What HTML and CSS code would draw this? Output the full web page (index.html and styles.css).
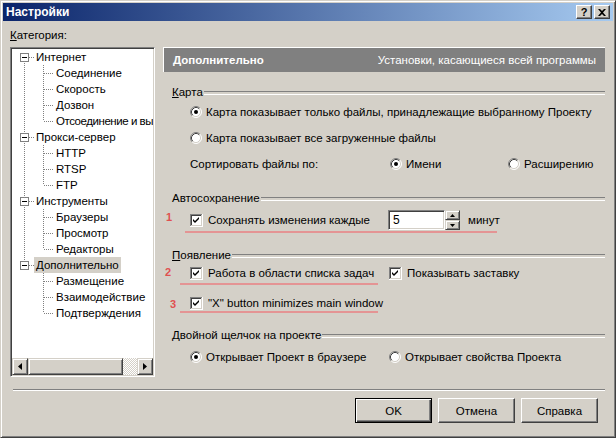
FILE: index.html
```html
<!DOCTYPE html>
<html>
<head>
<meta charset="utf-8">
<link rel="stylesheet" href="styles.css">
</head>
<body>
<div class="window">
  <div class="titlebar">
    <span class="title">Настройки</span>
    <div class="tb-btns">
      <span class="tb-btn">?</span>
      <span class="tb-btn"><svg width="8" height="7" viewBox="0 0 8 7"><path d="M0 0h2l2 2 2-2h2L5 3.5 8 7H6L4 5 2 7H0l3-3.5z" fill="#000"/></svg></span>
    </div>
  </div>
  <div class="body">
    <div class="cat-label"><u>К</u>атегория:</div>
    <div class="main">
      <div class="tree">
        <div class="tree-list">
          <div class="row"><span class="g rfirst"><span class="exp"></span></span><span class="txt">Интернет</span></div>
          <div class="row"><span class="g v"></span><span class="g2 tee"></span><span class="txt">Соединение</span></div>
          <div class="row"><span class="g v"></span><span class="g2 tee"></span><span class="txt">Скорость</span></div>
          <div class="row"><span class="g v"></span><span class="g2 tee"></span><span class="txt">Дозвон</span></div>
          <div class="row"><span class="g v"></span><span class="g2 ell"></span><span class="txt tight">Отсоединение и вы</span></div>
          <div class="row"><span class="g rmid"><span class="exp"></span></span><span class="txt">Прокси-сервер</span></div>
          <div class="row"><span class="g v"></span><span class="g2 tee"></span><span class="txt">HTTP</span></div>
          <div class="row"><span class="g v"></span><span class="g2 tee"></span><span class="txt">RTSP</span></div>
          <div class="row"><span class="g v"></span><span class="g2 ell"></span><span class="txt">FTP</span></div>
          <div class="row"><span class="g rmid"><span class="exp"></span></span><span class="txt">Инструменты</span></div>
          <div class="row"><span class="g v"></span><span class="g2 tee"></span><span class="txt">Браузеры</span></div>
          <div class="row"><span class="g v"></span><span class="g2 tee"></span><span class="txt">Просмотр</span></div>
          <div class="row"><span class="g v"></span><span class="g2 ell"></span><span class="txt">Редакторы</span></div>
          <div class="row"><span class="g rlast"><span class="exp"></span></span><span class="txt sel">Дополнительно</span></div>
          <div class="row"><span class="g"></span><span class="g2 tee"></span><span class="txt">Размещение</span></div>
          <div class="row"><span class="g"></span><span class="g2 tee"></span><span class="txt">Взаимодействие</span></div>
          <div class="row"><span class="g"></span><span class="g2 ell"></span><span class="txt">Подтверждения</span></div>
        </div>
        <div class="hscroll">
          <span class="sb-btn"><svg width="4" height="7" viewBox="0 0 4 7"><path d="M4 0v7L0 3.5z" fill="#000"/></svg></span>
          <span class="sb-thumb"></span>
          <span class="sb-track"></span>
          <span class="sb-btn"><svg width="4" height="7" viewBox="0 0 4 7"><path d="M0 0v7l4-3.5z" fill="#000"/></svg></span>
        </div>
      </div>
      <div class="panel">
        <div class="panel-head"><b>Дополнительно</b><span>Установки, касающиеся всей программы</span></div>

        <div class="legend g1"><span><u>К</u>арта</span></div>
        <div class="opt r1">
          <svg class="radio" width="12" height="12" viewBox="0 0 12 12"><use href="#rad"/><circle cx="6" cy="6" r="2" fill="#000"/></svg>
          <span>Карта показывает только файлы, принадлежащие выбранному Проекту</span>
        </div>
        <div class="opt r2">
          <svg class="radio" width="12" height="12" viewBox="0 0 12 12"><use href="#rad"/></svg>
          <span>Карта показывает все загруженные файлы</span>
        </div>
        <div class="opt r2">
          <span class="sort-label">Сортировать файлы по:</span>
          <span class="cell-name">
            <svg class="radio" width="12" height="12" viewBox="0 0 12 12"><use href="#rad"/><circle cx="6" cy="6" r="2" fill="#000"/></svg>
            <span>Имени</span>
          </span>
          <svg class="radio" width="12" height="12" viewBox="0 0 12 12"><use href="#rad"/></svg>
          <span>Расширению</span>
        </div>

        <div class="legend g2l"><span>Автосохранение</span></div>
        <div class="opt autosave">
          <span class="num n1">1</span>
          <span class="cell-first">
            <svg class="check" width="13" height="13" viewBox="0 0 13 13"><use href="#chk"/></svg>
            <span>Сохранять изменения каждые</span>
          </span>
          <span class="spin-field">5</span>
          <span class="spin">
            <span class="spin-btn"><svg width="5" height="3" viewBox="0 0 5 3"><path d="M2.5 0L5 3H0z" fill="#000"/></svg></span>
            <span class="spin-btn"><svg width="5" height="3" viewBox="0 0 5 3"><path d="M0 0h5L2.5 3z" fill="#000"/></svg></span>
          </span>
          <span class="minutes">минут</span>
          <span class="mark m1"></span>
        </div>

        <div class="legend g3"><span><u>П</u>оявление</span></div>
        <div class="opt row2">
          <span class="num n2">2</span>
          <span class="cell-first">
            <svg class="check" width="13" height="13" viewBox="0 0 13 13"><use href="#chk"/></svg>
            <span>Работа в области списка задач</span>
          </span>
          <svg class="check" width="13" height="13" viewBox="0 0 13 13"><use href="#chk"/></svg>
          <span>Показывать заставку</span>
          <span class="mark m2"></span>
        </div>
        <div class="opt row3">
          <span class="num n3">3</span>
          <svg class="check" width="13" height="13" viewBox="0 0 13 13"><use href="#chk"/></svg>
          <span>"X" button minimizes main window</span>
          <span class="mark m3"></span>
        </div>

        <div class="legend g4"><span><u>Д</u>войной щелчок на проекте</span></div>
        <div class="opt dbl">
          <span class="cell-first">
            <svg class="radio" width="12" height="12" viewBox="0 0 12 12"><use href="#rad"/><circle cx="6" cy="6" r="2" fill="#000"/></svg>
            <span>Открывает Проект в браузере</span>
          </span>
          <svg class="radio" width="12" height="12" viewBox="0 0 12 12"><use href="#rad"/></svg>
          <span>Открывает свойства Проекта</span>
        </div>
      </div>
    </div>
    <div class="sep"></div>
    <div class="buttons">
      <span class="btn default">OK</span>
      <span class="btn">Отмена</span>
      <span class="btn">Справка</span>
    </div>
  </div>
</div>

<svg class="defs" width="0" height="0">
  <defs>
    <g id="rad">
      <circle cx="6" cy="6" r="5" fill="#fff"/>
      <path d="M2.11 9.89A5.5 5.5 0 0 1 9.89 2.11" fill="none" stroke="#808080"/>
      <path d="M9.89 2.11A5.5 5.5 0 0 1 2.11 9.89" fill="none" stroke="#fff"/>
      <path d="M2.82 9.18A4.5 4.5 0 0 1 9.18 2.82" fill="none" stroke="#404040"/>
      <path d="M9.18 2.82A4.5 4.5 0 0 1 2.82 9.18" fill="none" stroke="#d4d0c8"/>
    </g>
    <g id="chk">
      <path d="M0 0.5H12M0.5 0V12" stroke="#808080"/>
      <path d="M1 1.5H11M1.5 1V11" stroke="#404040"/>
      <path d="M0 12.5H13M12.5 0V13" stroke="#fff"/>
      <path d="M1 11.5H12M11.5 1V12" stroke="#d4d0c8"/>
      <rect x="2" y="2" width="9" height="9" fill="#fff"/>
      <path d="M3 5L5 7L9 3V5L5 9L3 7Z" fill="#000"/>
    </g>
  </defs>
</svg>
</body>
</html>
```
FILE: styles.css
```css
* { box-sizing: border-box; }
html, body { margin: 0; padding: 0; background: #d4d0c8; }
body { font-family: "Liberation Sans", Arial, sans-serif; font-size: 11.5px; color: #000; }

.defs { position: absolute; width: 0; height: 0; }

.window {
  width: 616px; height: 438px;
  background: #d4d0c8;
  border: 1px solid; border-color: #d4d0c8 #404040 #404040 #d4d0c8;
  box-shadow: inset 1px 1px #fff, inset -1px -1px #808080;
  padding: 2px;
  display: flex; flex-direction: column;
}

.titlebar {
  height: 18px;
  background: linear-gradient(to right, #0a246a, #a6caf0);
  display: flex; align-items: center; justify-content: space-between;
  padding: 0 3px 0 3px;
  color: #fff;
}
.title { font-weight: bold; font-size: 12px; }
.tb-btns { display: flex; gap: 2px; }
.tb-btn {
  width: 16px; height: 14px;
  background: #d4d0c8; color: #000;
  border: 1px solid; border-color: #fff #404040 #404040 #fff;
  box-shadow: inset -1px -1px #808080;
  display: flex; align-items: center; justify-content: center;
  font-weight: bold; font-size: 11px; line-height: 1;
}

.body { flex: 1; padding: 0 8px 0 7px; display: flex; flex-direction: column; }
.cat-label { margin-top: 7px; height: 14px; line-height: 14px; padding-left: 0; }
.main { margin-top: 5px; display: flex; gap: 8px; height: 330px; }

.tree {
  width: 145px; height: 330px;
  background: #fff;
  border: 1px solid; border-color: #808080 #fff #fff #808080;
  box-shadow: inset 1px 1px #404040, inset -1px -1px #d4d0c8;
  padding: 1px;
  display: flex; flex-direction: column;
}
.tree-list { flex: 1; overflow: hidden; white-space: nowrap; padding-top: 0; }
.row { height: 16px; display: flex; align-items: stretch; }
.g, .g2 { flex: none; height: 16px; background-repeat: no-repeat; }
.g { width: 22px; display: flex; align-items: flex-start; padding-left: 8px; }
.g2 { width: 20px; }
.txt { padding: 0 2px; line-height: 16px; height: 16px; }
.txt.sel { background: #d4d0c8; }
.txt.tight { letter-spacing: -0.45px; padding-right: 0; }

.g.v { background-image: repeating-linear-gradient(to bottom, #808080 0 1px, transparent 1px 2px); background-size: 1px 16px; background-position: 12px 0; }
.g.rfirst, .g.rmid, .g.rlast {
  background-image:
    repeating-linear-gradient(to bottom, #808080 0 1px, transparent 1px 2px),
    repeating-linear-gradient(to right, #808080 0 1px, transparent 1px 2px);
  background-size: 1px 16px, 5px 1px;
  background-position: 12px 0, 17px 8px;
}
.g.rfirst { background-size: 1px 8px, 5px 1px; background-position: 12px 8px, 17px 8px; }
.g.rlast { background-size: 1px 8px, 5px 1px; background-position: 12px 0, 17px 8px; }
.g2.tee, .g2.ell {
  background-image:
    repeating-linear-gradient(to bottom, #808080 0 1px, transparent 1px 2px),
    repeating-linear-gradient(to right, #808080 0 1px, transparent 1px 2px);
  background-size: 1px 16px, 10px 1px;
  background-position: 9px 0, 10px 8px;
}
.g2.ell { background-size: 1px 8px, 10px 1px; }

.exp {
  width: 9px; height: 9px; margin-top: 4px;
  background: #fff; border: 1px solid #808080;
  display: flex; align-items: center; justify-content: center;
}
.exp::before { content: ""; width: 5px; height: 1px; background: #000; }

.hscroll { height: 17px; display: flex; flex: none; }
.sb-btn, .sb-thumb {
  background: #d4d0c8;
  border: 1px solid; border-color: #d4d0c8 #404040 #404040 #d4d0c8;
  box-shadow: inset 1px 1px #fff, inset -1px -1px #808080;
}
.sb-btn { width: 16px; display: flex; align-items: center; justify-content: center; }
.sb-thumb { width: 95px; }
.sb-track { flex: 1; background: repeating-conic-gradient(#fff 0 25%, #d4d0c8 0 50%) 0 0 / 2px 2px; }

.panel { flex: 1; display: flex; flex-direction: column; }
.panel-head {
  height: 25px; flex: none;
  background: #808080; color: #fff;
  border-top: 1px solid #fff; border-left: 1px solid #fff;
  display: flex; align-items: center; justify-content: space-between;
  padding: 0 9px 0 9px;
}
.panel-head b { font-weight: bold; font-size: 11.5px; }

.legend { height: 16px; display: flex; align-items: center; margin-left: 9px; gap: 1px; }
.legend::after { content: ""; flex: 1; height: 2px; border-top: 1px solid #808080; border-bottom: 1px solid #fff; margin-top: 1px; }
.g1 { margin-top: 12px; }
.g2l { margin-top: 18px; }
.g3 { margin-top: 17px; }
.g4 { margin-top: 16px; }

.opt { height: 16px; display: flex; align-items: center; margin-left: 27px; position: relative; white-space: nowrap; }
.r1 { margin-top: 4px; }
.r2 { margin-top: 10px; }
.autosave { margin-top: 4px; height: 20px; }
.row2 { margin-top: 2px; }
.row3 { margin-top: 14px; }
.dbl { margin-top: 6px; }

.radio { flex: none; margin-right: 4px; }
.check { flex: none; margin-right: 5px; }
.sort-label { width: 200px; flex: none; }
.cell-name { width: 118px; flex: none; display: flex; align-items: center; }
.cell-first { width: 199px; flex: none; display: flex; align-items: center; }
.autosave .cell-first { width: 198px; }

.spin-field {
  width: 57px; height: 20px; flex: none;
  background: #fff;
  border: 1px solid; border-color: #808080 #fff #fff #808080;
  box-shadow: inset 1px 1px #404040, inset -1px -1px #d4d0c8;
  padding: 2px 0 0 4px; line-height: 15px; font-size: 12px;
}
.spin { width: 15px; height: 20px; display: flex; flex-direction: column; flex: none; }
.spin-btn {
  height: 10px;
  background: #d4d0c8;
  border: 1px solid; border-color: #d4d0c8 #404040 #404040 #d4d0c8;
  box-shadow: inset 1px 1px #fff, inset -1px -1px #808080;
  display: flex; align-items: center; justify-content: center;
}
.minutes { margin-left: 8px; }

.num { position: absolute; color: #e05050; font-weight: bold; font-size: 11px; line-height: 12px; }
.n1 { left: -24px; top: 1px; }
.n2 { left: -25px; top: 1px; }
.n3 { left: -20px; top: 3px; }
.mark { position: absolute; height: 2px; background: #e49494; }
.m1 { left: -5px; top: 21px; width: 312px; }
.m2 { left: -10px; top: 18px; width: 198px; }
.m3 { left: -10px; top: 16px; width: 198px; }

.sep { margin-top: 12px; height: 2px; border-top: 1px solid #808080; border-bottom: 1px solid #fff; margin-left: 3px; margin-right: 0; }
.buttons { margin-top: 7px; display: flex; justify-content: flex-end; gap: 6px; padding-right: 7px; }
.btn {
  width: 77px; height: 25px;
  display: flex; align-items: center; justify-content: center;
  border: 1px solid; border-color: #fff #404040 #404040 #fff;
  box-shadow: inset -1px -1px #808080;
}
.btn.default {
  border-color: #000;
  box-shadow: inset 1px 1px #fff, inset -1px -1px #404040, inset -2px -2px #808080;
}
```
